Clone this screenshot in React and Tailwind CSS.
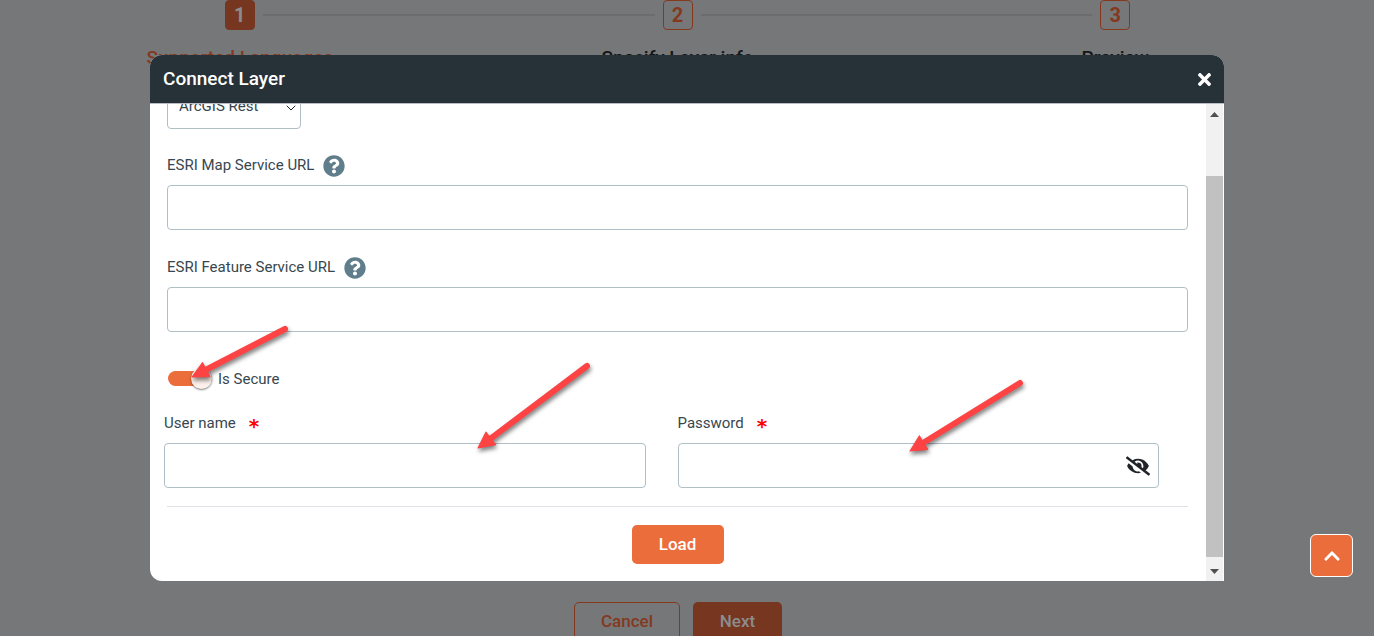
import { useState } from "react";
import { ChevronDown } from "lucide-react";
import {
  FaChevronUp,
  FaEyeSlash,
  FaQuestionCircle,
  FaTimes,
} from "react-icons/fa";

const steps = [
  { id: 1, label: "Supported Languages", active: true },
  { id: 2, label: "Specify Layer info" },
  { id: 3, label: "Preview" },
];

function Stepper() {
  return (
    <ol className="grid grid-cols-3 pr-10 pl-[21px]">
      {steps.map((step, index) => (
        <li key={step.id} className="flex flex-col items-center">
          <div className="flex w-full items-center">
            <span
              className={`mr-2 h-0.5 flex-1 ${index > 0 ? "bg-[#6b6c6d]" : ""}`}
            />
            <span
              className={`flex h-[30px] w-[30px] items-center justify-center rounded border text-xl font-bold ${
                step.active
                  ? "border-[#773620] bg-[#773620] text-[#8b8c8d]"
                  : "border-[#84391f] text-[#84391f]"
              }`}
            >
              {step.id}
            </span>
            <span
              className={`ml-2 h-0.5 flex-1 ${
                index < steps.length - 1 ? "bg-[#6b6c6d]" : ""
              }`}
            />
          </div>
          <span
            className={`mt-4 text-[19px] leading-6 font-medium ${
              step.active ? "text-[#84391f]" : "text-[#141617]"
            }`}
          >
            {step.label}
          </span>
        </li>
      ))}
    </ol>
  );
}

function UrlField({ id, label }) {
  return (
    <div className="mb-[23px]">
      <div className="flex h-[30px] items-center gap-[9px]">
        <label htmlFor={id}>{label}</label>
        <button type="button" aria-label={`${label} help`}>
          <FaQuestionCircle size={22} className="text-[#607d8b]" />
        </button>
      </div>
      <input
        id={id}
        type="text"
        className="mt-1 block h-[45px] w-full rounded border border-[#b0bec5] px-3 outline-none"
      />
    </div>
  );
}

function RequiredLabel({ htmlFor, children }) {
  return (
    <label htmlFor={htmlFor} className="flex h-6 items-center gap-[13px]">
      {children}
      <span className="pt-[6px] font-['DejaVu_Sans',sans-serif] text-xl leading-6 font-bold text-[#ff0000]">
        *
      </span>
    </label>
  );
}

// Annotation arrow, drawn from its tail to the tip of its head
function Arrow({ from, to }) {
  const dx = to[0] - from[0];
  const dy = to[1] - from[1];
  const length = Math.hypot(dx, dy);
  const angle = (Math.atan2(dy, dx) * 180) / Math.PI;

  return (
    <g transform={`translate(${from[0]} ${from[1]}) rotate(${angle})`}>
      <path
        d={`M0 0H${length - 12}`}
        stroke="#fd4343"
        strokeWidth="6"
        strokeLinecap="round"
      />
      <path
        d={`M${length} 0L${length - 16} -8V8Z`}
        fill="#fd4343"
        stroke="#fd4343"
        strokeLinejoin="round"
      />
    </g>
  );
}

function ScrollBar() {
  return (
    <div className="mr-px flex w-[17px] shrink-0 flex-col bg-[#f1f1f1]">
      <div className="flex h-[72px] justify-center pt-2">
        <svg width="9" height="5" viewBox="0 0 9 5" fill="#505050">
          <path d="M0 5L4.500 0L9 5Z" />
        </svg>
      </div>
      <div className="flex-1 bg-[#c1c1c1]" />
      <div className="flex h-6 items-center justify-center pt-1">
        <svg width="9" height="5" viewBox="0 0 9 5" fill="#505050">
          <path d="M0 0L4.500 5L9 0Z" />
        </svg>
      </div>
    </div>
  );
}

function ConnectLayerDialog() {
  const [secure, setSecure] = useState(true);
  const [showPassword, setShowPassword] = useState(false);

  return (
    <div
      role="dialog"
      aria-labelledby="dialog-title"
      className="relative w-full max-w-[1074px] shrink-0 overflow-hidden rounded-l-xl rounded-tr-xl bg-white text-[#37474f]"
    >
      <div className="flex h-[49px] items-center justify-between border-b border-[#b9bcc4] bg-[#273238] pr-[10px] pl-[13px] text-white">
        <h2 id="dialog-title" className="text-[19px] font-medium">
          Connect Layer
        </h2>
        <button type="button" aria-label="Close">
          <FaTimes size={19} />
        </button>
      </div>

      <div className="flex h-[477px]">
        {/* Form, scrolled to its end */}
        <form className="flex min-w-0 flex-1 flex-col justify-end overflow-hidden pr-[18px] pb-[17px] text-[15px]">
          <div className="pl-[17px]">
            <div className="relative mb-[22px] w-[134px]">
              <select
                aria-label="Service type"
                className="block h-[45px] w-full appearance-none rounded border border-[#b0bec5] bg-white px-[11px]"
              >
                <option>ArcGIS Rest</option>
              </select>
              <ChevronDown
                size={16}
                strokeWidth={1.5}
                className="pointer-events-none absolute top-4 right-[2px] text-[#212529]"
              />
            </div>
            <UrlField id="map-url" label="ESRI Map Service URL" />
            <UrlField id="feature-url" label="ESRI Feature Service URL" />
          </div>

          <label className="mt-[13px] ml-[18px] flex h-6 items-center gap-[6px] self-start">
            <input
              type="checkbox"
              role="switch"
              checked={secure}
              onChange={() => setSecure(!secure)}
              className="peer sr-only"
            />
            <span className="flex h-[15px] w-11 items-center rounded-full bg-gray-300 peer-checked:justify-end peer-checked:bg-[#ec6d3c]">
              <span className="h-[21px] w-[21px] shrink-0 rounded-full bg-[#fdf1ec] shadow-[0_1px_2px_rgba(0,0,0,0.5)]" />
            </span>
            Is Secure
          </label>

          <div className="mt-[21px] mr-[29px] ml-[14px] grid grid-cols-2 gap-8">
            <div>
              <RequiredLabel htmlFor="user-name">User name</RequiredLabel>
              <input
                id="user-name"
                type="text"
                className="mt-2 block h-[45px] w-full rounded border border-[#b0bec5] px-3 outline-none"
              />
            </div>
            <div>
              <RequiredLabel htmlFor="password">Password</RequiredLabel>
              <div className="mt-2 flex h-[45px] items-center rounded border border-[#b0bec5] pr-2">
                <input
                  id="password"
                  type={showPassword ? "text" : "password"}
                  className="min-w-0 flex-1 px-3 outline-none"
                />
                <button
                  type="button"
                  aria-label="Show password"
                  onClick={() => setShowPassword(!showPassword)}
                >
                  <FaEyeSlash size={24} className="text-[#212529]" />
                </button>
              </div>
            </div>
          </div>

          <div className="mt-[18px] ml-[17px] flex justify-center border-t border-[#dee2e6] pt-[18px]">
            <button
              type="button"
              className="h-[39px] w-[92px] rounded-[5px] bg-[#ec6d3c] text-[17px] font-medium text-white"
            >
              Load
            </button>
          </div>
        </form>
        <ScrollBar />
      </div>

      <svg
        className="pointer-events-none absolute top-0 left-0 drop-shadow-[1px_3px_2px_rgba(0,0,0,0.5)]"
        width="1074"
        height="526"
        fill="none"
      >
        <Arrow from={[135, 274]} to={[42, 322]} />
        <Arrow from={[437, 311]} to={[328, 393]} />
        <Arrow from={[870, 328]} to={[760, 396]} />
      </svg>
    </div>
  );
}

export default function App() {
  return (
    <div className="h-screen overflow-hidden bg-[#767779] font-[Roboto,sans-serif]">
      <main className="flex h-full flex-col justify-between">
        <Stepper />
        <div className="flex h-[34px] justify-center gap-[13px] pr-[18px] text-[17px] font-medium">
          <button
            type="button"
            className="h-10 w-[106px] rounded-[5px] border border-[#84391f] text-[#84391f]"
          >
            Cancel
          </button>
          <button
            type="button"
            className="h-10 w-[89px] rounded-[5px] bg-[#773620] text-[#8b8c8d]"
          >
            Next
          </button>
        </div>
      </main>

      <div className="pointer-events-none fixed inset-0 flex flex-col items-center pt-[55px] *:pointer-events-auto">
        <ConnectLayerDialog />
      </div>

      <button
        type="button"
        aria-label="Back to top"
        className="fixed right-[21px] bottom-[59px] flex h-[43px] w-[43px] items-center justify-center rounded-md border border-white bg-[#ec6d3c] text-white"
      >
        <FaChevronUp size={18} />
      </button>
    </div>
  );
}
